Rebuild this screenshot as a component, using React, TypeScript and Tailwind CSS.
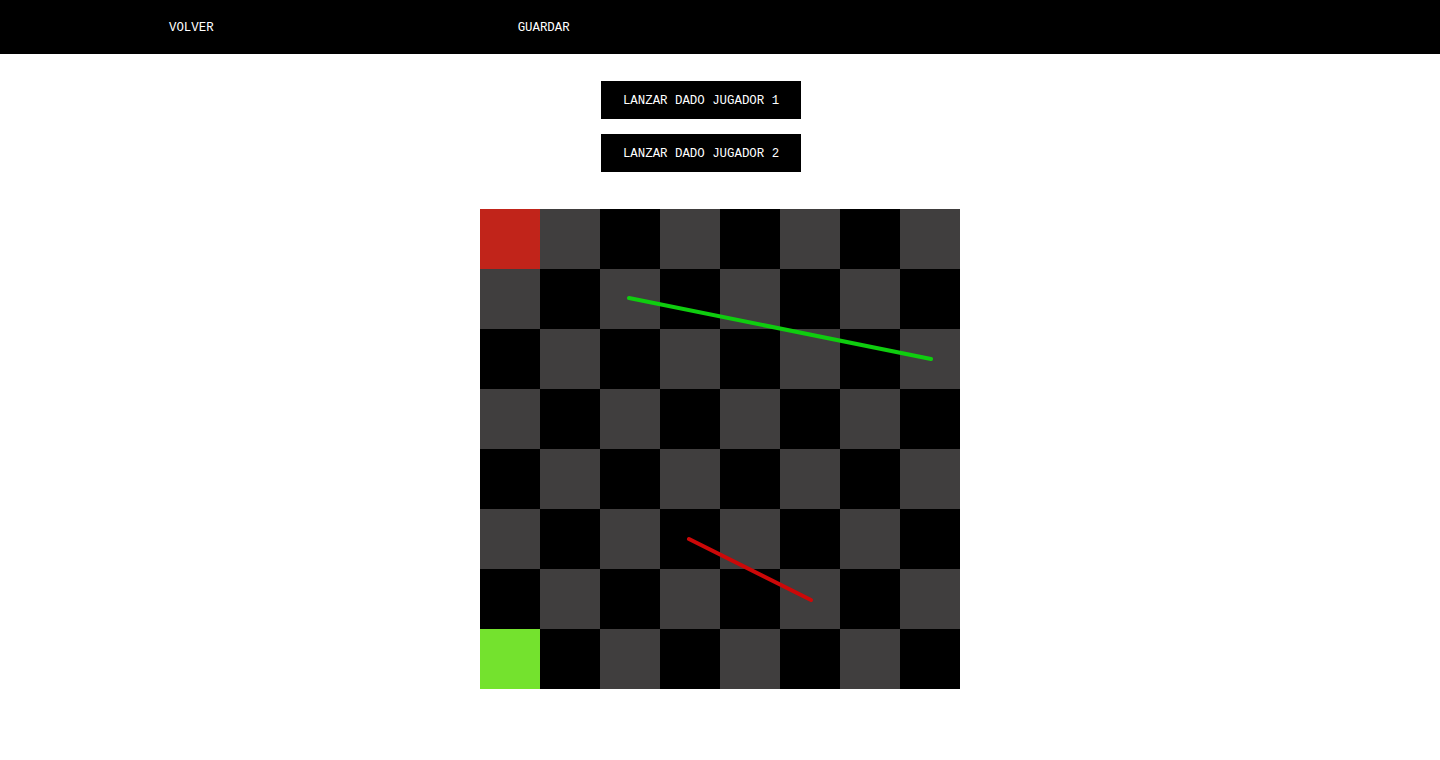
const cells = Array.from({ length: 64 }, (_, i) => i)

function cellClass(i: number) {
  const r = Math.floor(i / 8)
  const c = i % 8
  if (r === 0 && c === 0) return 'bg-[#c1241a]'
  if (r === 7 && c === 0) return 'bg-[#74e22e]'
  return (r + c) % 2 === 1 ? 'bg-[#403e3e]' : 'bg-black'
}

export default function App() {
  return (
    <div className="min-h-screen bg-white font-['Liberation_Mono',monospace] text-[12.4px] text-white">
      <header className="flex h-[54px] items-center bg-black pt-[3px]">
        <span className="ml-[169px]">VOLVER</span>
        <span className="ml-[304px]">GUARDAR</span>
      </header>

      <div className="mt-[27px] flex flex-col gap-[15px] pl-[601px]">
        <button className="h-[38px] w-[200px] bg-black pt-[3px] text-white">LANZAR DADO JUGADOR 1</button>
        <button className="h-[38px] w-[200px] bg-black pt-[3px] text-white">LANZAR DADO JUGADOR 2</button>
      </div>

      <div className="relative mx-auto mt-[37px] grid w-[480px] grid-cols-8">
        {cells.map((i) => (
          <div key={i} className={`h-[60px] w-[60px] ${cellClass(i)}`} />
        ))}
        <svg className="pointer-events-none absolute inset-0" width="480" height="480" viewBox="0 0 480 480">
          <line x1="149" y1="89" x2="451" y2="150" stroke="#0fcd0f" strokeWidth="4" strokeLinecap="round" />
          <line x1="209" y1="330" x2="331" y2="391" stroke="#cc0808" strokeWidth="4" strokeLinecap="round" />
        </svg>
      </div>
    </div>
  )
}
